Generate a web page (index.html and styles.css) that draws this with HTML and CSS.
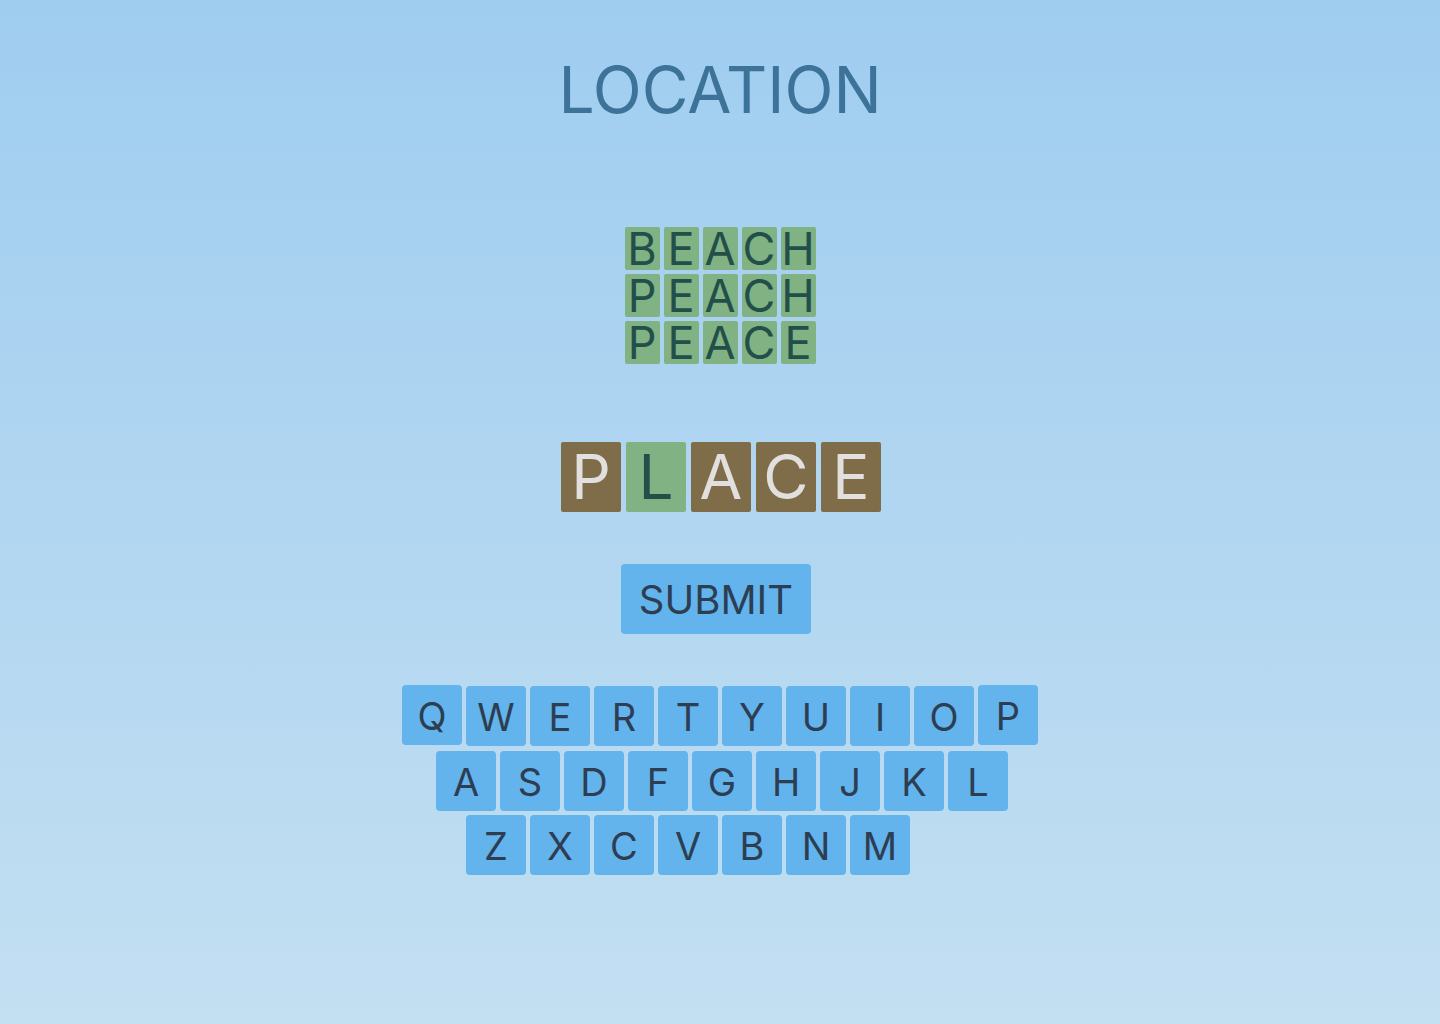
FILE: index.html
```html
<!DOCTYPE html>
<html lang="en">
<head>
<meta charset="utf-8">
<title>Location</title>
<link rel="stylesheet" href="styles.css">
</head>
<body>
<main class="game">
  <h1 class="title">LOCATION</h1>

  <div class="guesses">
    <div class="guess-row">
      <span class="mini">B</span><span class="mini">E</span><span class="mini">A</span><span class="mini">C</span><span class="mini">H</span>
    </div>
    <div class="guess-row">
      <span class="mini">P</span><span class="mini">E</span><span class="mini">A</span><span class="mini">C</span><span class="mini">H</span>
    </div>
    <div class="guess-row">
      <span class="mini">P</span><span class="mini">E</span><span class="mini">A</span><span class="mini">C</span><span class="mini">E</span>
    </div>
  </div>

  <div class="current">
    <span class="tile tile-miss">P</span>
    <span class="tile tile-hit">L</span>
    <span class="tile tile-miss">A</span>
    <span class="tile tile-miss">C</span>
    <span class="tile tile-miss">E</span>
  </div>

  <button class="submit" type="button">SUBMIT</button>

  <div class="keyboard">
    <div class="kb-row">
      <span class="key key-up">Q</span><span class="key">W</span><span class="key">E</span><span class="key">R</span><span class="key">T</span><span class="key">Y</span><span class="key">U</span><span class="key">I</span><span class="key">O</span><span class="key key-up">P</span>
    </div>
    <div class="kb-row kb-row-mid">
      <span class="key">A</span><span class="key">S</span><span class="key">D</span><span class="key">F</span><span class="key">G</span><span class="key">H</span><span class="key">J</span><span class="key">K</span><span class="key">L</span>
    </div>
    <div class="kb-row">
      <span class="key">Z</span><span class="key">X</span><span class="key">C</span><span class="key">V</span><span class="key">B</span><span class="key">N</span><span class="key">M</span><span class="key key-ghost"></span>
    </div>
  </div>
</main>
</body>
</html>
```
FILE: styles.css
```css
html, body {
  margin: 0;
  padding: 0;
}

body {
  min-height: 1024px;
  background: linear-gradient(180deg, #9fcdf0 0%, #c3dff2 100%);
  font-family: Inter, "Noto Sans", "Liberation Sans", sans-serif;
}

.game {
  display: flex;
  flex-direction: column;
  align-items: center;
  padding-top: 58px;
}

.title {
  margin: 0;
  font-size: 64px;
  line-height: 64px;
  font-weight: 400;
  color: #3e7399;
  letter-spacing: 0;
}

.guesses {
  margin-top: 105px;
  display: flex;
  flex-direction: column;
  gap: 4px;
}

.guess-row {
  display: flex;
  gap: 4px;
}

.mini {
  width: 35px;
  height: 43px;
  border-radius: 2px;
  background: #80b283;
  color: #234f4a;
  font-size: 45px;
  line-height: 38px;
  display: flex;
  align-items: center;
  justify-content: center;
}

.current {
  margin-top: 78px;
  margin-left: 2px;
  display: flex;
  gap: 5px;
}

.tile {
  width: 60px;
  height: 70px;
  border-radius: 2px;
  font-size: 62px;
  line-height: 1;
  display: flex;
  align-items: center;
  justify-content: center;
}

.tile-miss {
  background: #7f6d4a;
  color: #e2dfdf;
}

.tile-hit {
  background: #80b283;
  color: #234f4a;
}

.submit {
  margin-top: 52px;
  margin-left: -8px;
  width: 190px;
  height: 70px;
  border: none;
  border-radius: 4px;
  background: #63b3ed;
  color: #2d3e52;
  font-family: inherit;
  font-size: 40px;
  line-height: 1;
  padding: 2px 0 0 0;
}

.keyboard {
  margin-top: 52px;
  display: flex;
  flex-direction: column;
  align-items: center;
  gap: 4.5px;
}

.kb-row {
  display: flex;
  gap: 4px;
}

.kb-row-mid {
  margin-left: 4px;
}

.key {
  width: 60px;
  height: 60px;
  border-radius: 4px;
  background: #63b3ed;
  color: #2d3e52;
  font-size: 38px;
  line-height: 1;
  display: flex;
  align-items: center;
  justify-content: center;
  padding-top: 2px;
  box-sizing: border-box;
}

.key-up {
  transform: translateY(-1px);
}

.key-ghost {
  visibility: hidden;
}
```
